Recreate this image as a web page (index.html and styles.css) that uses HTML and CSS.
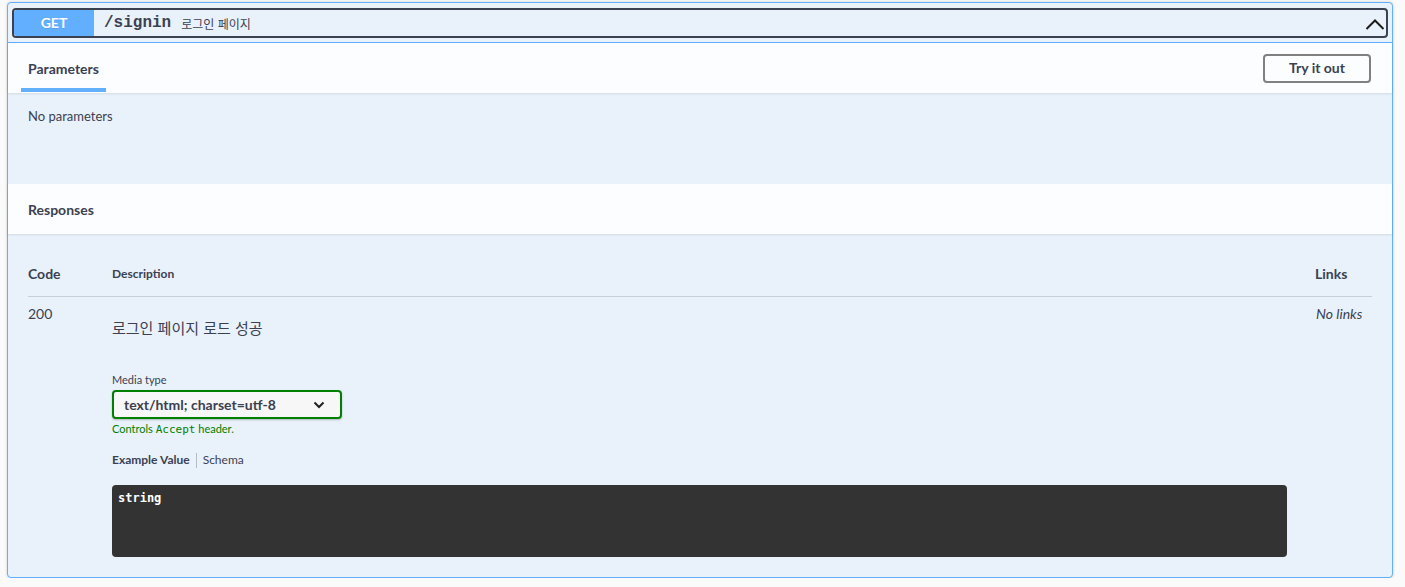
FILE: index.html
```html
<!DOCTYPE html>
<html lang="ko">
  <head>
    <meta charset="utf-8">
    <title>/signin</title>
    <link rel="stylesheet" href="styles.css">
  </head>
  <body>
    <div class="wrapper">
      <div class="opblock">
        <div class="summary">
          <div class="summary-control">
            <span class="method">GET</span>
            <span class="path">/signin</span>
            <span class="summary-desc">로그인 페이지</span>
            <svg class="arrow" width="20" height="12" viewBox="0 0 20 12">
              <polyline points="1.5,11 10,2.5 18.5,11" fill="none" stroke="#1b1b1b" stroke-width="2"/>
            </svg>
          </div>
        </div>

        <div class="section-header">
          <div class="tab">Parameters</div>
          <div class="try-out">Try it out</div>
        </div>
        <div class="params-body">No parameters</div>

        <div class="section-header resp-header">
          <div class="resp-title">Responses</div>
        </div>
        <div class="resp-body">
          <div class="resp-table head">
            <div class="col-code">Code</div>
            <div class="col-desc">Description</div>
            <div class="col-links">Links</div>
          </div>
          <div class="resp-table row">
            <div class="col-code status">200</div>
            <div class="col-desc">
              <p class="desc-text">로그인 페이지 로드 성공</p>
              <div class="media-label">Media type</div>
              <div class="media-select">
                <span>text/html; charset=utf-8</span>
                <svg width="12" height="8" viewBox="0 0 12 8">
                  <polyline points="1.5,1.5 6,6 10.5,1.5" fill="none" stroke="#222" stroke-width="2"/>
                </svg>
              </div>
              <div class="controls">Controls <code>Accept</code> header.</div>
              <div class="model-tabs">
                <span class="tab-active">Example Value</span>
                <span class="tab-sep"></span>
                <span class="tab-other">Schema</span>
              </div>
              <pre class="example">string</pre>
            </div>
            <div class="col-links no-links">No links</div>
          </div>
        </div>
      </div>
    </div>
  </body>
</html>
```

FILE: styles.css
```css
* {
  box-sizing: border-box;
}
body {
  margin: 0;
  background-color: #fafafa;
  font-family: Lato, "Noto Sans CJK KR", sans-serif;
  color: #3b4151;
}
.wrapper {
  padding: 2px 12px 0 7px;
}
.opblock {
  border: 1px solid #61affe;
  border-radius: 4px;
  background-color: #e9f2fb;
  height: 576px;
  box-shadow: 0 0 3px rgba(0, 0, 0, 0.19);
}

/* summary bar */
.summary {
  padding: 5px 4px 4px 4px;
  border-bottom: 1px solid #61affe;
}
.summary-control {
  display: flex;
  align-items: center;
  height: 30px;
  border: 2px solid #3b4151;
  border-radius: 4px;
  padding-right: 1px;
}
.method {
  width: 80px;
  height: 26px;
  background-color: #61affe;
  color: white;
  font-weight: 700;
  font-size: 14px;
  line-height: 26px;
  text-align: center;
  border-radius: 3px 0 0 3px;
  text-shadow: 0 1px 0 rgba(0, 0, 0, 0.1);
}
.path {
  margin-left: 10px;
  font-family: "Liberation Mono", monospace;
  font-weight: 700;
  font-size: 16px;
  color: #3b4151;
}
.summary-desc {
  margin-left: 10px;
  font-family: "Noto Sans CJK KR", sans-serif;
  font-size: 12px;
  color: #3b4151;
  flex: 1;
}
.arrow {
  margin-top: 2px;
}

/* section headers */
.section-header {
  display: flex;
  align-items: center;
  justify-content: space-between;
  height: 50px;
  padding: 0 21px 0 13px;
  background-color: rgba(255, 255, 255, 0.8);
  box-shadow: 0 1px 2px rgba(0, 0, 0, 0.1);
}
.tab {
  align-self: flex-start;
  height: 49px;
  padding: 5px 7px 0 7px;
  border-bottom: 4px solid #61affe;
  display: flex;
  align-items: center;
  font-size: 14px;
  font-weight: 700;
}
.try-out {
  width: 108px;
  height: 29px;
  border: 2px solid #808080;
  border-radius: 4px;
  font-size: 14px;
  font-weight: 700;
  line-height: 24px;
  text-align: center;
  color: #3b4151;
}
.params-body {
  height: 91px;
  padding: 13px 20px 12px 20px;
  font-size: 13px;
  line-height: 20px;
}
.resp-header {
  padding-left: 20px;
}
.resp-title {
  font-size: 14px;
  font-weight: 700;
}

/* responses */
.resp-body {
  padding: 20px 20px 0 20px;
}
.resp-table {
  display: grid;
  grid-template-columns: 84px 1fr 57px;
}
.head {
  padding: 10px 0 12px 0;
  border-bottom: 1px solid rgba(59, 65, 81, 0.2);
  line-height: 20px;
}
.head .col-code,
.head .col-links {
  font-size: 14px;
  font-weight: 700;
}
.head .col-desc {
  font-size: 12px;
  font-weight: 700;
}
.row {
  padding-top: 7px;
}
.status {
  font-size: 14px;
  line-height: 20px;
}
.row .col-desc {
  padding-right: 28px;
}
.desc-text {
  margin: 14px 0 0 0;
  font-family: "Noto Sans CJK KR", sans-serif;
  font-size: 15px;
  line-height: 20px;
}
.media-label {
  margin-top: 34px;
  font-size: 11px;
  line-height: 16px;
}
.media-select {
  margin-top: 2px;
  width: 230px;
  height: 29px;
  border: 2px solid #008000;
  border-radius: 4px;
  background-color: #f7f7f7;
  box-shadow: 0 1px 2px rgba(0, 0, 0, 0.25);
  display: flex;
  align-items: center;
  justify-content: space-between;
  padding: 0 15px 0 10px;
  font-size: 14px;
  font-weight: 700;
}
.controls {
  margin-top: 3px;
  font-size: 11px;
  line-height: 14px;
  color: #008000;
}
.controls code {
  font-family: "DejaVu Sans Mono", monospace;
  font-size: 11px;
}
.model-tabs {
  margin-top: 15px;
  display: flex;
  align-items: center;
  font-size: 12px;
  line-height: 16px;
}
.tab-active {
  font-weight: 700;
}
.tab-sep {
  width: 1px;
  height: 15px;
  background-color: rgba(59, 65, 81, 0.3);
  margin: 0 6px 0 6px;
}
.example {
  margin: 17px 0 0 0;
  height: 72px;
  background-color: #333;
  border-radius: 4px;
  padding: 6px 6px;
  font-family: "DejaVu Sans Mono", monospace;
  font-weight: 700;
  font-size: 12px;
  color: white;
}
.no-links {
  font-size: 14px;
  font-style: italic;
  line-height: 20px;
  padding-left: 1px;
}
```
